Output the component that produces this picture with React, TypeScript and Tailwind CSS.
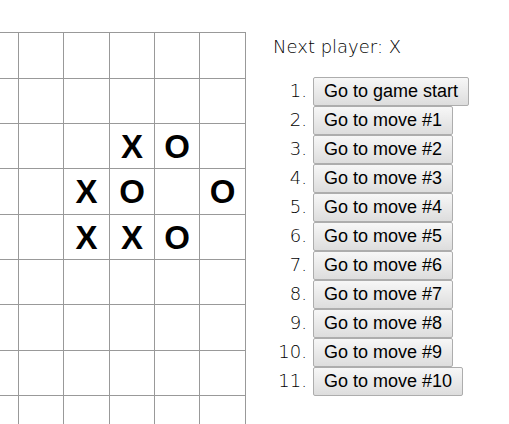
const ROW_H = ["h-[46px]", "h-[45px]", "h-[45px]", "h-[46px]", "h-[45px]", "h-[45px]", "h-[46px]", "h-[45px]", "h-[46px]"];

// visible part of the board, "" means empty square
const BOARD: string[][] = [
  ["", "", "", "", "", ""],
  ["", "", "", "", "", ""],
  ["", "", "", "X", "O", ""],
  ["", "", "X", "O", "", "O"],
  ["", "", "X", "X", "O", ""],
  ["", "", "", "", "", ""],
  ["", "", "", "", "", ""],
  ["", "", "", "", "", ""],
  ["", "", "", "", "", ""],
];

const MOVES = ["Go to game start", ...Array.from({ length: 10 }, (_, i) => `Go to move #${i + 1}`)];

function Square({ value }: { value: string }) {
  return (
    <div className="border-l border-t border-[#999] flex items-center justify-center text-[33px] font-bold leading-none text-black font-['Liberation_Sans',Arial,sans-serif]">
      {value}
    </div>
  );
}

function Board() {
  return (
    <div className="ml-[-27px] mt-[32px] shrink-0 border-r border-[#999] self-start">
      {BOARD.map((row, r) => (
        <div key={r} className={`grid grid-cols-[45px_45px_46px_45px_45px_46px] ${ROW_H[r]}`}>
          {row.map((v, c) => (
            <Square key={c} value={v} />
          ))}
        </div>
      ))}
    </div>
  );
}

export default function App() {
  return (
    <div className="w-[509px] h-[424px] overflow-hidden bg-white flex">
      <Board />

      <div className="ml-[27px] pt-[36px] font-['DejaVu_Sans',sans-serif] font-extralight text-[18px] text-black">
        <div className="leading-[21px]">Next player: X</div>

        <ol className="mt-[20px] ml-[-1px]">
          {MOVES.map((m, i) => (
            <li key={i} className="flex items-baseline">
              <span className="w-[35px] text-right">{i + 1}.</span>
              <button className="ml-[6px] h-[29px] px-[10px] border border-[#adadad] rounded-[2px] bg-gradient-to-b from-[#f7f7f7] to-[#dddddd] text-black font-['Liberation_Sans',Arial,sans-serif] font-normal text-[18px] leading-[21px]">
                {m}
              </button>
            </li>
          ))}
        </ol>
      </div>
    </div>
  );
}
